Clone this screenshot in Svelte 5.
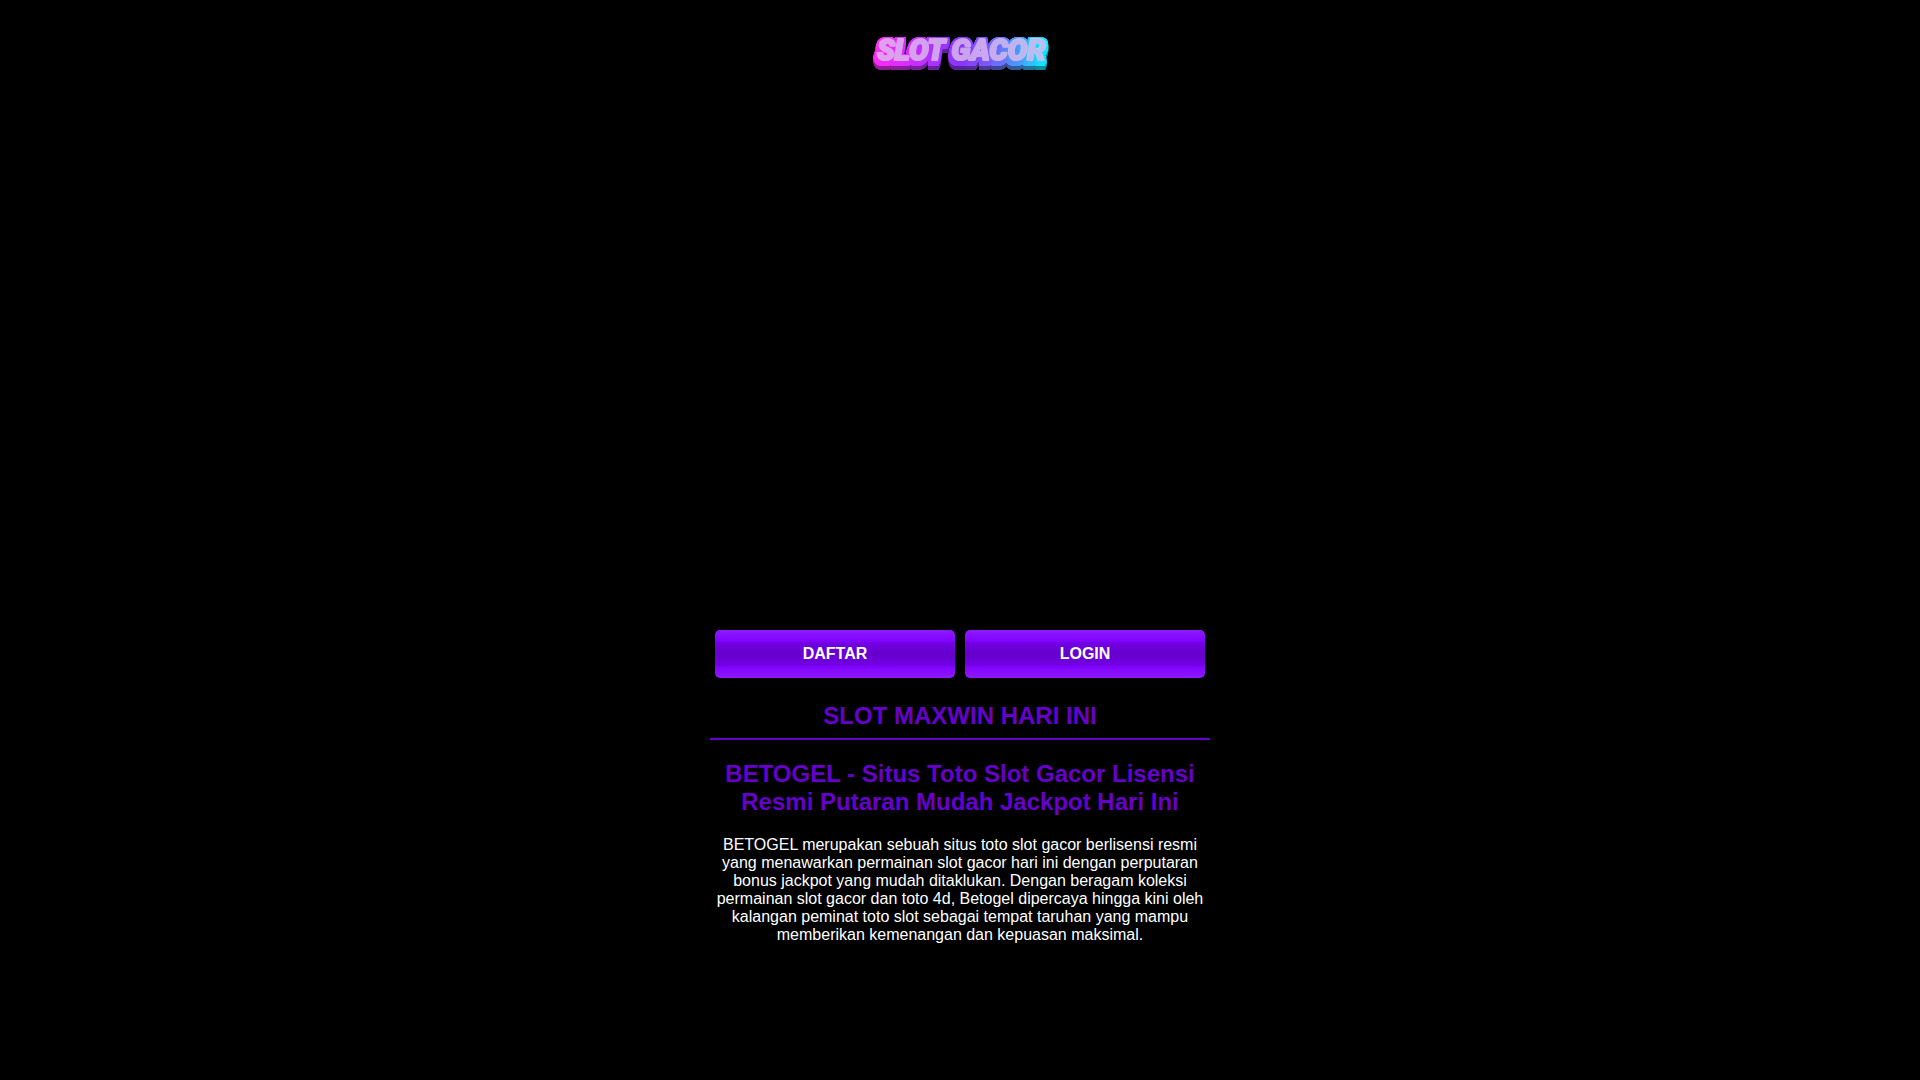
<script>
  const links = [
    { label: "DAFTAR", href: "#daftar" },
    { label: "LOGIN", href: "#login" },
  ];

  // rows of the extruded side of the logo, going down from the letters
  const steps = [1, 2, 3, 4];
</script>

<header class="header">
  <a href="#home" class="logo">
    <svg viewBox="0 0 200 60" width="200" height="60">
      <defs>
        <linearGradient id="side" gradientUnits="userSpaceOnUse" x1="12" y1="0" x2="190" y2="0">
          <stop offset="0" stop-color="#ff2df0" />
          <stop offset="0.2" stop-color="#d42dff" />
          <stop offset="0.38" stop-color="#9f35fa" />
          <stop offset="0.5" stop-color="#8b35fa" />
          <stop offset="0.65" stop-color="#7a58fa" />
          <stop offset="0.82" stop-color="#4d98fa" />
          <stop offset="1" stop-color="#00f5ff" />
        </linearGradient>

        <!-- dilated letters pulled down for the side, a darker copy below, pale face on top -->
        <filter id="extrude" filterUnits="userSpaceOnUse" x="0" y="0" width="200" height="60" color-interpolation-filters="sRGB">
          <feMorphology in="SourceGraphic" operator="dilate" radius="2 1" result="wide" />
          <feGaussianBlur in="wide" stdDeviation="0.5" result="soft" />
          <feComponentTransfer in="soft" result="rim">
            <feFuncA type="linear" slope="1.6" intercept="-0.1" />
          </feComponentTransfer>
          {#each steps as step}
            <feOffset in="rim" dx={step > 2 ? -1 : 0} dy={step} result="row{step}" />
          {/each}
          <feMerge result="block">
            <feMergeNode in="row4" />
            <feMergeNode in="row3" />
            <feMergeNode in="row2" />
            <feMergeNode in="row1" />
            <feMergeNode in="rim" />
          </feMerge>
          <feOffset in="block" dy="4" result="low" />
          <feOffset in="block" dy="2" result="mid" />
          <feMerge result="under">
            <feMergeNode in="low" />
            <feMergeNode in="mid" />
          </feMerge>
          <feColorMatrix in="under" type="matrix" values="0.62 0 0 0 0  0 0.62 0 0 0  0 0 0.62 0 0  0 0 0 1 0" result="shade" />

          <feFlood flood-color="#f2dcfa" flood-opacity="0.6" />
          <feComposite in2="SourceAlpha" operator="in" result="edge" />
          <feOffset in="SourceAlpha" dx="1" dy="1" result="shifted" />
          <feComposite in="SourceGraphic" in2="shifted" operator="in" result="inner" />
          <feColorMatrix in="inner" type="matrix" values="0.18 0 0 0 0.7  0 0.18 0 0 0.6  0 0 0.1 0 0.84  0 0 0 1 0" result="face" />
          <feMerge>
            <feMergeNode in="shade" />
            <feMergeNode in="block" />
            <feMergeNode in="edge" />
            <feMergeNode in="face" />
          </feMerge>
        </filter>
      </defs>
      <text x="17" y="35" class="word">SLOT GACOR</text>
    </svg>
  </a>
</header>

<main class="content">
  <div class="banner"></div>

  <nav class="actions">
    {#each links as link}
      <a class="btn" href={link.href}>{link.label}</a>
    {/each}
  </nav>

  <h1>SLOT MAXWIN HARI INI</h1>

  <section class="article">
    <h2>BETOGEL - Situs Toto Slot Gacor Lisensi Resmi Putaran Mudah Jackpot Hari Ini</h2>
    <p>
      BETOGEL merupakan sebuah situs toto slot gacor berlisensi resmi yang menawarkan permainan slot
      gacor hari ini dengan perputaran bonus jackpot yang mudah ditaklukan. Dengan beragam koleksi
      permainan slot gacor dan toto 4d, Betogel dipercaya hingga kini oleh kalangan peminat toto slot
      sebagai tempat taruhan yang mampu memberikan kemenangan dan kepuasan maksimal.
    </p>
  </section>
</main>

<style>
  :global(body) {
    margin: 0;
    background-color: #000;
    color: #fff;
    font-family: "Liberation Sans", Arial, sans-serif;
    font-size: 16px;
    line-height: 18px;
  }

  .header {
    display: flex;
    justify-content: center;
    padding: 25px 0;
  }

  .logo,
  .logo svg {
    display: block;
  }

  .word {
    fill: url(#side);
    stroke: url(#side);
    stroke-width: 2px;
    stroke-linejoin: round;
    filter: url(#extrude);
    font-family: Roboto, sans-serif;
    font-size: 29px;
    font-weight: 900;
    font-style: italic;
  }

  .content {
    max-width: 500px;
    margin: 0 auto;
    text-align: center;
  }

  .banner {
    height: 515px;
  }

  .actions {
    display: grid;
    grid-template-columns: 1fr 1fr;
    gap: 10px;
    padding: 5px;
  }

  .btn {
    padding: 15px 0;
    border-radius: 5px;
    background: linear-gradient(
      #8e1aff 0%,
      #8000ff 25%,
      #7300e6 25%,
      #6600cc 50%,
      #7300e6 75%,
      #8000ff 75%,
      #8e1aff 100%
    );
    color: #fff;
    font-weight: bold;
    text-decoration: none;
  }

  h1,
  h2 {
    margin: 0;
    color: #6600cc;
    font-size: 24px;
    line-height: 28px;
  }

  h1 {
    margin-top: 19px;
    padding-bottom: 8px;
    border-bottom: 2px solid #6600cc;
  }

  .article {
    padding: 20px 5px;
  }

  .article p {
    margin: 20px 0;
  }
</style>
